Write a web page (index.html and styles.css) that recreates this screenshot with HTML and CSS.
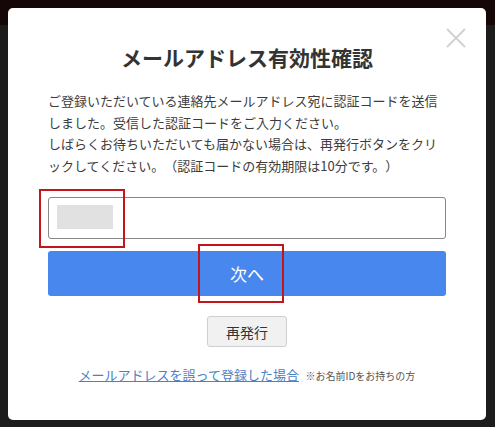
FILE: index.html
```html
<!DOCTYPE html>
<html lang="ja">
<head>
    <meta charset="UTF-8">
    <meta name="viewport" content="width=device-width, initial-scale=1.0">
    <title>メールアドレス有効性確認</title>
    <link rel="stylesheet" href="styles.css">
</head>
<body>
    <div class="page-head">
        <span class="page-head-text">お名前メールアドレスの確認</span>
    </div>
    <div class="page-body"></div>

    <div class="modal">
        <button class="modal-close" type="button" aria-label="閉じる">
            <svg width="20" height="20" viewBox="0 0 20 20">
                <path d="M1 1 L19 19 M19 1 L1 19" stroke="#d2d2d2" stroke-width="2" fill="none"/>
            </svg>
        </button>
        <h1 class="modal-title">メールアドレス有効性確認</h1>
        <p class="modal-text">
            ご登録いただいている連絡先メールアドレス宛に認証コードを送信<br>
            しました。受信した認証コードをご入力ください。<br>
            しばらくお待ちいただいても届かない場合は、再発行ボタンをクリ<br>
            ックしてください。（認証コードの有効期限は10分です。）
        </p>
        <div class="code-field">
            <span class="code-mask"></span>
        </div>
        <button class="btn-next" type="button">次へ</button>
        <div class="resend-row">
            <button class="btn-resend" type="button">再発行</button>
        </div>
        <p class="modal-foot">
            <a href="#" class="foot-link">メールアドレスを誤って登録した場合</a>
            <span class="foot-note">※お名前IDをお持ちの方</span>
        </p>

        <span class="mark mark-field"></span>
        <span class="mark mark-next"></span>
    </div>
</body>
</html>
```

FILE: styles.css
```css
html, body{
    margin:0;
    padding:0;
}
body{
    width:495px;
    height:427px;
    overflow:hidden;
    background:#1c1c1c;
    font-family:"Noto Sans CJK JP", "Noto Sans", sans-serif;
    color:#333;
    text-spacing-trim:space-all;
}
.page-head{
    height:25px;
    background:#150707;
    text-align:center;
}
.page-head-text{
    font-size:10px;
    line-height:16px;
    color:#3a2a2a;
}
.page-body{height:402px;}

.modal{
    position:fixed;
    left:8px;
    top:8px;
    width:478px;
    height:412px;
    box-sizing:border-box;
    padding:34px 40px 0;
    background:#fff;
    border-radius:5px;
}
.modal-close{
    position:absolute;
    top:20px;
    right:20px;
    width:20px;
    height:20px;
    padding:0;
    border:none;
    background:none;
}
.modal-close svg{display:block;}
.modal-title{
    margin:0;
    font-size:21px;
    line-height:30px;
    font-weight:bold;
    text-align:center;
    color:#333;
}
.modal-text{
    margin:18px 0 0;
    font-size:13px;
    line-height:21.5px;
    color:#3c3c3c;
    white-space:nowrap;
}
.code-field{
    margin-top:21px;
    height:42px;
    box-sizing:border-box;
    border:1px solid #888;
    border-radius:3px;
    padding:7px 8px;
}
.code-mask{
    display:block;
    width:56px;
    height:24px;
    background:#e1e1e1;
}
.btn-next{
    display:block;
    width:100%;
    height:45px;
    margin-top:12px;
    border:none;
    border-radius:3px;
    background:#4887ed;
    color:#fff;
    font-family:inherit;
    font-size:17px;
}
.resend-row{
    margin-top:20px;
    text-align:center;
}
.btn-resend{
    width:80px;
    height:31px;
    border:1px solid #cfcfcf;
    border-radius:3px;
    background:#f1f1f1;
    color:#333;
    font-family:inherit;
    font-size:14px;
    padding:0;
}
.modal-foot{
    margin:16px 0 0;
    line-height:20px;
    text-align:center;
    white-space:nowrap;
}
.foot-link{
    font-size:13px;
    color:#4a80c4;
    text-decoration:underline;
}
.foot-note{
    margin-left:3px;
    font-size:10px;
    color:#555;
}

.mark{
    position:absolute;
    border:2px solid #c3161c;
    box-sizing:border-box;
}
.mark-field{
    left:31px;
    top:181px;
    width:86px;
    height:59px;
}
.mark-next{
    left:190px;
    top:236px;
    width:86px;
    height:59px;
}
```
